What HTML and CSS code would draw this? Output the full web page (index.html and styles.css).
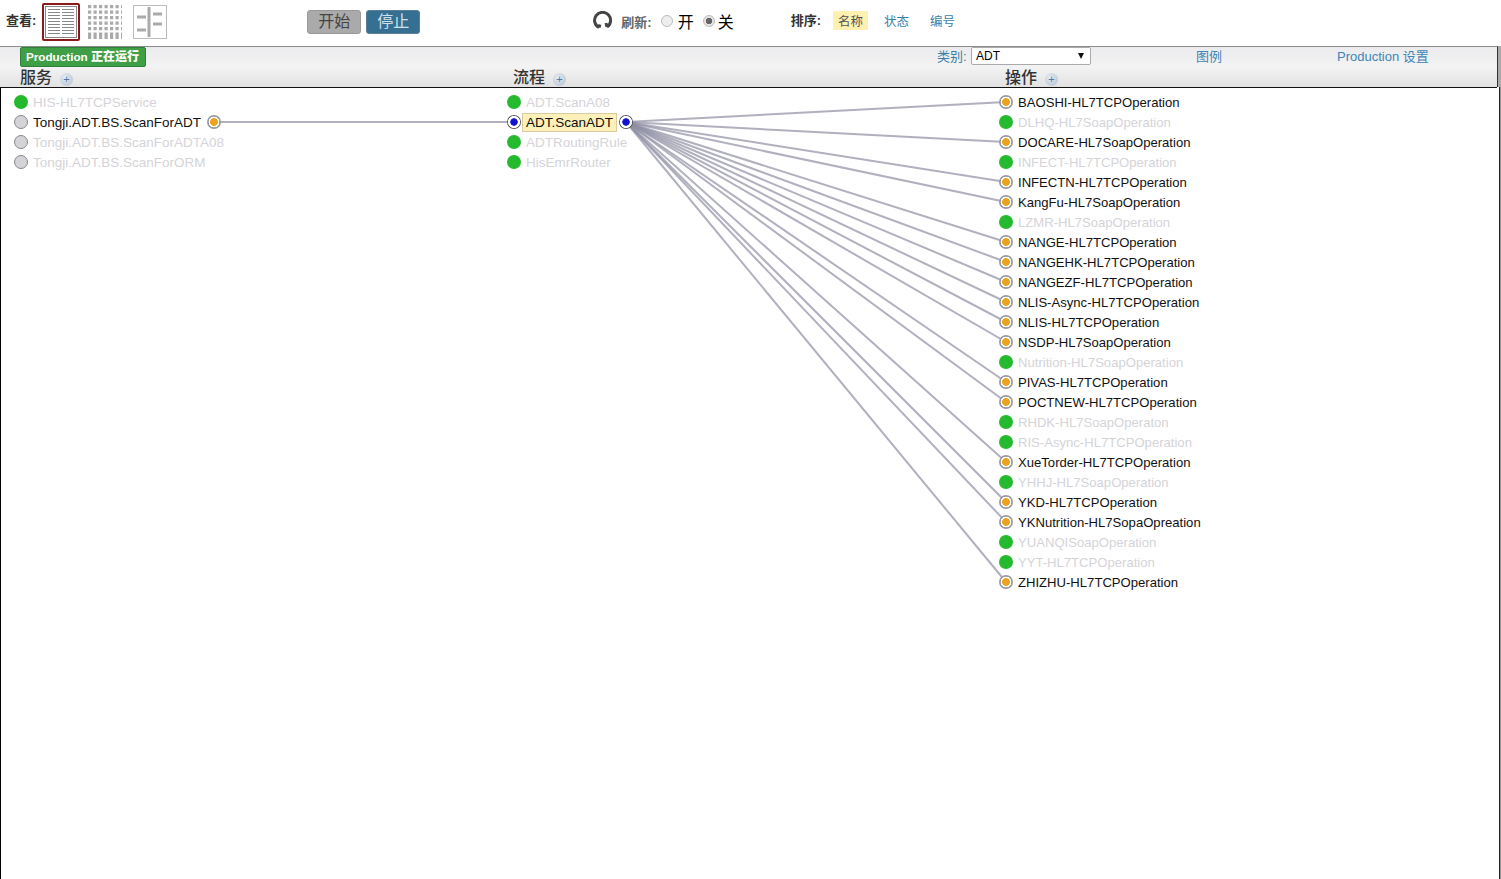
FILE: index.html
```html
<!DOCTYPE html>
<html lang="zh">
<head>
    <meta charset="UTF-8">
    <title>Production</title>
    <link rel="stylesheet" href="styles.css">
</head>
<body>
    <div class="toolbar">
        <span class="tool-label view-label">查看:</span>
        <span class="view-icon selected">
            <svg width="32" height="32" viewBox="0 0 32 32">
                <rect x="0.5" y="0.5" width="31" height="31" fill="#fff" stroke="#888"/>
                <path d="M3 3.5h12M17 3.5h12M3 6.5h12M17 6.5h12M3 9.5h12M17 9.5h12M3 12.5h12M17 12.5h12M3 15.5h12M17 15.5h12M3 18.5h12M17 18.5h12M3 21.5h12M17 21.5h12M3 24.5h12M17 24.5h12M3 27.5h12M17 27.5h12" stroke="#888" stroke-width="1.2"/>
            </svg>
        </span>
        <span class="view-icon">
            <svg width="34" height="34" viewBox="0 0 34 34">
                <path d="M0 1.6H34M0 7.1H34M0 12.6H34M0 18.1H34M0 23.6H34M0 29.1H34M0 32.4H34" stroke="#aaa" stroke-width="3.2" stroke-dasharray="3.2 2.3"/>
            </svg>
        </span>
        <span class="view-icon">
            <svg width="34" height="34" viewBox="0 0 34 34">
                <rect x="0.5" y="0.5" width="33" height="33" fill="#fff" stroke="#bbb"/>
                <path d="M16 2V32" stroke="#aaa" stroke-width="3"/>
                <path d="M4 12h9M4 25h9M20 9h9M20 19h9" stroke="#aaa" stroke-width="3"/>
            </svg>
        </span>
        <button class="btn btn-start">开始</button>
        <button class="btn btn-stop">停止</button>
        <svg class="refresh-icon" width="21" height="19" viewBox="0 0 21 19">
            <path d="M7 16.5A8 8 0 1 1 15 16M15 16l-1-4M7 16.5l1-3" fill="none" stroke="#444" stroke-width="3"/>
        </svg>
        <span class="tool-label refresh-label">刷新:</span>
        <span class="radio"></span>
        <span class="radio-text">开</span>
        <span class="radio checked"></span>
        <span class="radio-text">关</span>
        <span class="tool-label sort-label">排序:</span>
        <span class="sort-item active">名称</span>
        <span class="sort-item">状态</span>
        <span class="sort-item">编号</span>
    </div>

    <div class="band">
        <div class="band-top">
            <span class="status-badge">Production <b>正在运行</b></span>
            <span class="category">类别:</span>
            <span class="select-box">ADT<i></i></span>
            <a class="band-link legend">图例</a>
            <a class="band-link settings">Production 设置</a>
        </div>
        <div class="band-heads">
            <div class="col-head">服务<span class="plus">+</span></div>
            <div class="col-head">流程<span class="plus">+</span></div>
            <div class="col-head">操作<span class="plus">+</span></div>
        </div>
    </div>

    <div class="diagram">
        <svg class="links" width="1497" height="792" viewBox="0 0 1497 792">
            <g stroke="#8e8ea4" stroke-opacity="0.7" stroke-width="2" fill="none">
                <path d="M214 34H513"/>
                <path d="M626 34L1006 14"/>
                <path d="M626 34L1006 54"/>
                <path d="M626 34L1006 94"/>
                <path d="M626 34L1006 114"/>
                <path d="M626 34L1006 154"/>
                <path d="M626 34L1006 174"/>
                <path d="M626 34L1006 194"/>
                <path d="M626 34L1006 214"/>
                <path d="M626 34L1006 234"/>
                <path d="M626 34L1006 254"/>
                <path d="M626 34L1006 294"/>
                <path d="M626 34L1006 314"/>
                <path d="M626 34L1006 374"/>
                <path d="M626 34L1006 414"/>
                <path d="M626 34L1006 434"/>
                <path d="M626 34L1006 494"/>
            </g>
        </svg>

        <div class="column">
            <div class="item dim"><span class="dot green"></span>HIS-HL7TCPService</div>
            <div class="item"><span class="dot grey"></span>Tongji.ADT.BS.ScanForADT<span class="port orange"></span></div>
            <div class="item dim"><span class="dot grey"></span>Tongji.ADT.BS.ScanForADTA08</div>
            <div class="item dim"><span class="dot grey"></span>Tongji.ADT.BS.ScanForORM</div>
        </div>

        <div class="column">
            <div class="item dim"><span class="dot green"></span>ADT.ScanA08</div>
            <div class="item"><span class="port blue first"></span><span class="item-selected">ADT.ScanADT</span><span class="port blue"></span></div>
            <div class="item dim"><span class="dot green"></span>ADTRoutingRule</div>
            <div class="item dim"><span class="dot green"></span>HisEmrRouter</div>
        </div>

        <div class="column ops">
            <div class="item"><span class="port orange first"></span>BAOSHI-HL7TCPOperation</div>
            <div class="item dim"><span class="dot green"></span>DLHQ-HL7SoapOperation</div>
            <div class="item"><span class="port orange first"></span>DOCARE-HL7SoapOperation</div>
            <div class="item dim"><span class="dot green"></span>INFECT-HL7TCPOperation</div>
            <div class="item"><span class="port orange first"></span>INFECTN-HL7TCPOperation</div>
            <div class="item"><span class="port orange first"></span>KangFu-HL7SoapOperation</div>
            <div class="item dim"><span class="dot green"></span>LZMR-HL7SoapOperation</div>
            <div class="item"><span class="port orange first"></span>NANGE-HL7TCPOperation</div>
            <div class="item"><span class="port orange first"></span>NANGEHK-HL7TCPOperation</div>
            <div class="item"><span class="port orange first"></span>NANGEZF-HL7TCPOperation</div>
            <div class="item"><span class="port orange first"></span>NLIS-Async-HL7TCPOperation</div>
            <div class="item"><span class="port orange first"></span>NLIS-HL7TCPOperation</div>
            <div class="item"><span class="port orange first"></span>NSDP-HL7SoapOperation</div>
            <div class="item dim"><span class="dot green"></span>Nutrition-HL7SoapOperation</div>
            <div class="item"><span class="port orange first"></span>PIVAS-HL7TCPOperation</div>
            <div class="item"><span class="port orange first"></span>POCTNEW-HL7TCPOperation</div>
            <div class="item dim"><span class="dot green"></span>RHDK-HL7SoapOperaton</div>
            <div class="item dim"><span class="dot green"></span>RIS-Async-HL7TCPOperation</div>
            <div class="item"><span class="port orange first"></span>XueTorder-HL7TCPOperation</div>
            <div class="item dim"><span class="dot green"></span>YHHJ-HL7SoapOperation</div>
            <div class="item"><span class="port orange first"></span>YKD-HL7TCPOperation</div>
            <div class="item"><span class="port orange first"></span>YKNutrition-HL7SopaOpreation</div>
            <div class="item dim"><span class="dot green"></span>YUANQISoapOperation</div>
            <div class="item dim"><span class="dot green"></span>YYT-HL7TCPOperation</div>
            <div class="item"><span class="port orange first"></span>ZHIZHU-HL7TCPOperation</div>
        </div>
    </div>
</body>
</html>
```

FILE: styles.css
```css
html, body {
    margin: 0;
    height: 100%;
    overflow: hidden;
}
body {
    font-family: "Liberation Sans", "Noto Sans CJK SC", sans-serif;
    background-color: #fff;
    color: #000;
}

/* top bar */
.toolbar {
    display: flex;
    align-items: center;
    height: 46px;
    box-sizing: border-box;
    padding-left: 6px;
    padding-bottom: 2px;
}
.tool-label {
    font-size: 13px;
    font-weight: bold;
    color: #333;
    margin-bottom: 6px;
}
.view-label {
    margin-right: 6px;
}
.view-icon {
    display: flex;
    margin-right: 11px;
}
.view-icon svg {
    display: block;
}
.view-icon.selected {
    border: 2px solid #8b1a1a;
    padding: 1px;
    margin-right: 8px;
    border-radius: 2px;
}
.btn {
    width: 54px;
    height: 24px;
    padding: 0 0 1px;
    font-family: inherit;
    font-size: 16px;
    line-height: 16px;
    border-radius: 3px;
    border: 1px solid #999;
    box-sizing: border-box;
}
.btn-start {
    margin-left: 129px;
    margin-right: 5px;
    background-color: #aaa;
    color: #444;
}
.btn-stop {
    background-color: #356f92;
    border-color: #5a7f96;
    color: #cfe0ea;
}
.refresh-icon {
    margin-left: 172px;
    margin-bottom: 3px;
    margin-right: 8px;
}
.refresh-label {
    color: #666;
    margin-right: 9px;
    margin-bottom: 1px;
}
.radio {
    width: 12px;
    height: 12px;
    border-radius: 50%;
    border: 1px solid #bbb;
    background-color: #eee;
    box-sizing: border-box;
    margin-right: 5px;
    margin-bottom: 2px;
}
.radio.checked {
    background: radial-gradient(circle, #666 0 3px, #e4e4e4 3.5px);
    margin-right: 3px;
}
.radio-text {
    font-size: 16px;
    margin-right: 9px;
    margin-bottom: 3px;
}
.tool-label.sort-label {
    margin-left: 48px;
    margin-right: 12px;
}
.sort-item {
    font-size: 12.5px;
    color: #3b7ea6;
    padding: 0 5px;
    margin-right: 11px;
    margin-bottom: 4px;
}
.sort-item.active {
    background-color: #fdf0b0;
    color: #555;
}

/* grey band above the diagram */
.band {
    height: 41px;
    margin-right: 3px;
    box-sizing: border-box;
    border-top: 1px solid #8c8c8c;
    border-right: 1px solid #333;
    background: linear-gradient(#ebebed, #f3f3f4 50%, #e2e2e2);
    box-shadow: 3px 0 #aaa;
}
.band-top {
    display: flex;
    align-items: flex-start;
    height: 20px;
    padding-left: 20px;
}
.status-badge {
    width: 126px;
    height: 20px;
    box-sizing: border-box;
    padding-left: 5px;
    font-size: 11.7px;
    line-height: 18px;
    font-weight: bold;
    color: #fff;
    background-color: #3f9f46;
    border: 1px solid #2f8037;
    border-radius: 2px;
    white-space: nowrap;
}
.status-badge b {
    font-size: 12px;
}
.category {
    margin-left: 791px;
    margin-top: -1px;
    width: 34px;
    font-size: 13px;
    color: #3b7ea6;
}
.select-box {
    position: relative;
    width: 120px;
    height: 18px;
    box-sizing: border-box;
    padding-left: 4px;
    font-size: 12px;
    line-height: 16px;
    border: 1px solid #aaa;
    border-radius: 2px;
    background-color: #fff;
}
.select-box i {
    position: absolute;
    right: 6px;
    top: 5px;
    border: 3px solid transparent;
    border-top: 6px solid #111;
    border-bottom: 0;
}
.band-link {
    font-size: 13px;
    color: #3f84b5;
    margin-top: -1px;
}
.legend {
    margin-left: 105px;
}
.settings {
    margin-left: 115px;
}
.band-heads {
    display: grid;
    grid-template-columns: 493px 492px 1fr;
    padding-left: 20px;
    padding-top: 1px;
}
.col-head {
    font-size: 16px;
    line-height: 19px;
    color: #333;
    font-weight: 500;
    white-space: nowrap;
}
.plus {
    display: inline-block;
    width: 13px;
    height: 13px;
    margin-left: 8px;
    border-radius: 50%;
    background: radial-gradient(circle at 40% 35%, #e6ecf2, #aebfd0);
    color: #4f79a8;
    font-size: 11px;
    line-height: 13px;
    text-align: center;
}

/* diagram */
.diagram {
    position: relative;
    display: grid;
    grid-template-columns: 493px 493px 1fr;
    height: 792px;
    margin-right: 4px;
    box-sizing: border-box;
    padding: 4px 0 0 14px;
    border-top: 1px solid #111;
    border-left: 1px solid #000;
    box-shadow: 2px 0 #fff, 3px 0 #222, 4px 0 #999;
}
.links {
    position: absolute;
    left: -1px;
    top: 0;
}
.column {
    position: relative;
    margin-left: -1px;
}
.item {
    display: flex;
    align-items: center;
    height: 20px;
    font-size: 13.5px;
    white-space: nowrap;
    color: #111;
}
.ops .item {
    font-size: 13.1px;
    margin-left: -1px;
}
.item.dim {
    color: #d4d4d8;
}
.dot {
    width: 14px;
    height: 14px;
    border-radius: 50%;
    margin-right: 5px;
    flex: none;
    box-sizing: border-box;
}
.dot.green {
    background-color: #25b92e;
}
.dot.grey {
    background-color: #d4d4d8;
    border: 1px solid #888;
}
.port {
    width: 14px;
    height: 14px;
    box-sizing: border-box;
    border-radius: 50%;
    margin-left: 6px;
    flex: none;
}
.port.orange {
    background: radial-gradient(circle, #eca31f 0 3.6px, #fff 4.2px 5.1px, #9a9a9a 5.6px);
}
.port.blue {
    background: radial-gradient(circle, #1212d0 0 3.4px, #fff 4px 5.8px, #555 6.3px);
}
.port.first {
    margin-left: 0;
    margin-right: 5px;
}
.item-selected {
    padding: 1px 3px 0;
    line-height: 16px;
    background-color: #fdf0b8;
    border: 1px solid #d8cda0;
    box-sizing: border-box;
    margin-left: -4px;
}
.item-selected + .port {
    margin-left: 2px;
}
```
